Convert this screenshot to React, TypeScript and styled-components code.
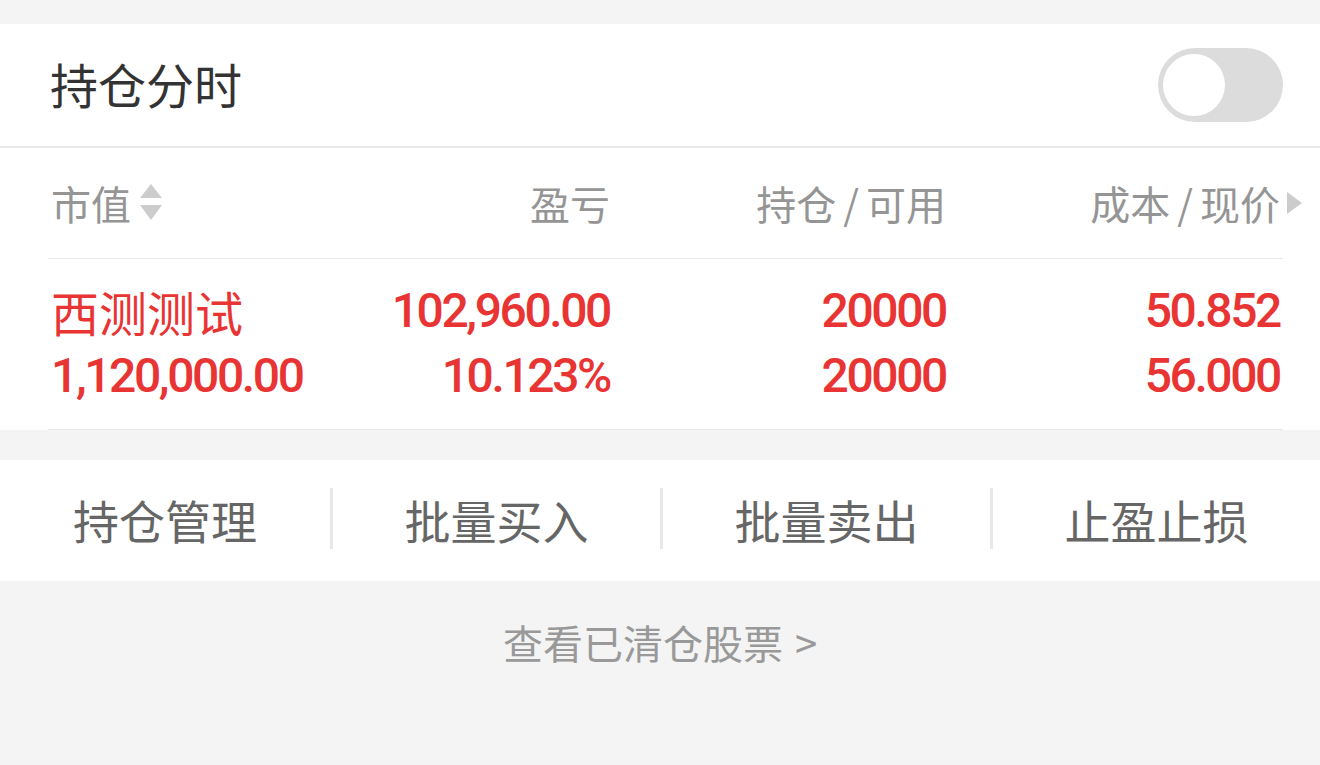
import React from "react";
import styled, { createGlobalStyle } from "styled-components";

const GlobalStyle = createGlobalStyle`
  body {
    margin: 0;
    background: #f4f4f4;
    font-family: "Noto Sans CJK SC", "Noto Sans", sans-serif;
  }
`;

const rows = [
  {
    name: "西测测试",
    value: "1,120,000.00",
    profit: "102,960.00",
    rate: "10.123%",
    hold: "20000",
    usable: "20000",
    cost: "50.852",
    price: "56.000",
  },
];

const actions = ["持仓管理", "批量买入", "批量卖出", "止盈止损"];

function App() {
  return (
    <Page>
      <GlobalStyle />
      <Card>
        <TitleBar>
          <Title>持仓分时</Title>
          <Toggle>
            <Knob />
          </Toggle>
        </TitleBar>

        <Table>
          <HeadRow>
            <HeadCell>
              市值
              <SortIcon width='24' height='38' viewBox='0 0 24 38'>
                <path d='M12 0 L23 14 L1 14 Z' fill='#cccccc' />
                <path d='M1 21 L23 21 L12 36 Z' fill='#cccccc' />
              </SortIcon>
            </HeadCell>
            <HeadCell $right>盈亏</HeadCell>
            <HeadCell $right>
              持仓<Slash>/</Slash>可用
            </HeadCell>
            <HeadCell $right>
              成本<Slash>/</Slash>现价
              <MoreIcon width='15' height='22' viewBox='0 0 15 22'>
                <path d='M0 0 L15 11 L0 22 Z' fill='#cccccc' />
              </MoreIcon>
            </HeadCell>
          </HeadRow>

          {rows.map((r) => (
            <DataRow key={r.name}>
              <Cell>
                <Name>{r.name}</Name>
                <Num>{r.value}</Num>
              </Cell>
              <Cell $right>
                <Num>{r.profit}</Num>
                <Num>{r.rate}</Num>
              </Cell>
              <Cell $right>
                <Num>{r.hold}</Num>
                <Num>{r.usable}</Num>
              </Cell>
              <Cell $right>
                <Num>{r.cost}</Num>
                <Num>{r.price}</Num>
              </Cell>
            </DataRow>
          ))}
        </Table>
      </Card>

      <ActionBar>
        {actions.map((a) => (
          <Action key={a}>{a}</Action>
        ))}
      </ActionBar>

      <ClearedLink>
        查看已清仓股票<Chevron>&gt;</Chevron>
      </ClearedLink>
    </Page>
  );
}

export default App;

const Page = styled.div`
  width: 1320px;
  min-height: 765px;
  padding-top: 24px;
  box-sizing: border-box;
  background: #f4f4f4;
`;

const Card = styled.div`
  background: #ffffff;
`;

const TitleBar = styled.div`
  height: 122px;
  display: flex;
  align-items: center;
  justify-content: space-between;
  padding: 0 37px 0 50px;
  border-bottom: 2px solid #e8e8e8;
`;

const Title = styled.div`
  font-size: 48px;
  color: #333333;
  line-height: 1;
  margin-top: -4px;
`;

const Toggle = styled.div`
  width: 125px;
  height: 74px;
  border-radius: 37px;
  background: #dcdcdc;
  padding: 6px 5px;
  box-sizing: border-box;
  display: flex;
  align-items: center;
`;

const Knob = styled.div`
  width: 62px;
  height: 62px;
  border-radius: 50%;
  background: #ffffff;
`;

const Table = styled.div`
  margin: 0 37px 0 48px;
`;

const HeadRow = styled.div`
  display: grid;
  grid-template-columns: 281px 281px 336px 1fr;
  height: 110px;
  align-items: center;
  border-bottom: 1px solid #e8e8e8;
`;

const HeadCell = styled.div<{ $right?: boolean }>`
  position: relative;
  display: flex;
  align-items: center;
  justify-content: ${(p) => (p.$right ? "flex-end" : "flex-start")};
  padding-left: ${(p) => (p.$right ? "0" : "3px")};
  font-size: 40px;
  color: #959595;
  line-height: 1;
  &:last-child {
    padding-right: 3px;
  }
`;

const Slash = styled.span`
  margin: 0 7px;
`;

const SortIcon = styled.svg`
  margin-left: 8px;
`;

const MoreIcon = styled.svg`
  position: absolute;
  right: -19px;
  top: 50%;
  transform: translateY(-50%);
`;

const DataRow = styled.div`
  display: grid;
  grid-template-columns: 281px 281px 336px 1fr;
  padding: 19px 0 21px;
  border-bottom: 1px solid #e8e8e8;
`;

const Cell = styled.div<{ $right?: boolean }>`
  display: flex;
  flex-direction: column;
  align-items: ${(p) => (p.$right ? "flex-end" : "flex-start")};
  padding-left: ${(p) => (p.$right ? "0" : "3px")};
  &:last-child {
    padding-right: 3px;
  }
`;

const Name = styled.div`
  height: 65px;
  display: flex;
  align-items: center;
  font-size: 48px;
  color: #e93434;
`;

const Num = styled.div`
  height: 65px;
  display: flex;
  align-items: center;
  font-family: Roboto, "Noto Sans", sans-serif;
  font-weight: 500;
  font-size: 48px;
  letter-spacing: -2.4px;
  color: #e93434;
`;

const ActionBar = styled.div`
  margin-top: 30px;
  height: 121px;
  background: #ffffff;
  display: grid;
  grid-template-columns: repeat(4, 1fr);
  align-items: center;
`;

const Action = styled.div`
  display: flex;
  align-items: center;
  justify-content: center;
  height: 61px;
  font-size: 46px;
  color: #666666;
  margin-top: -4px;
  & + & {
    border-left: 3px solid #e8e8e8;
  }
`;

const ClearedLink = styled.div`
  height: 122px;
  display: flex;
  align-items: center;
  justify-content: center;
  font-size: 40px;
  color: #999999;
`;

const Chevron = styled.span`
  margin-left: 12px;
`;
